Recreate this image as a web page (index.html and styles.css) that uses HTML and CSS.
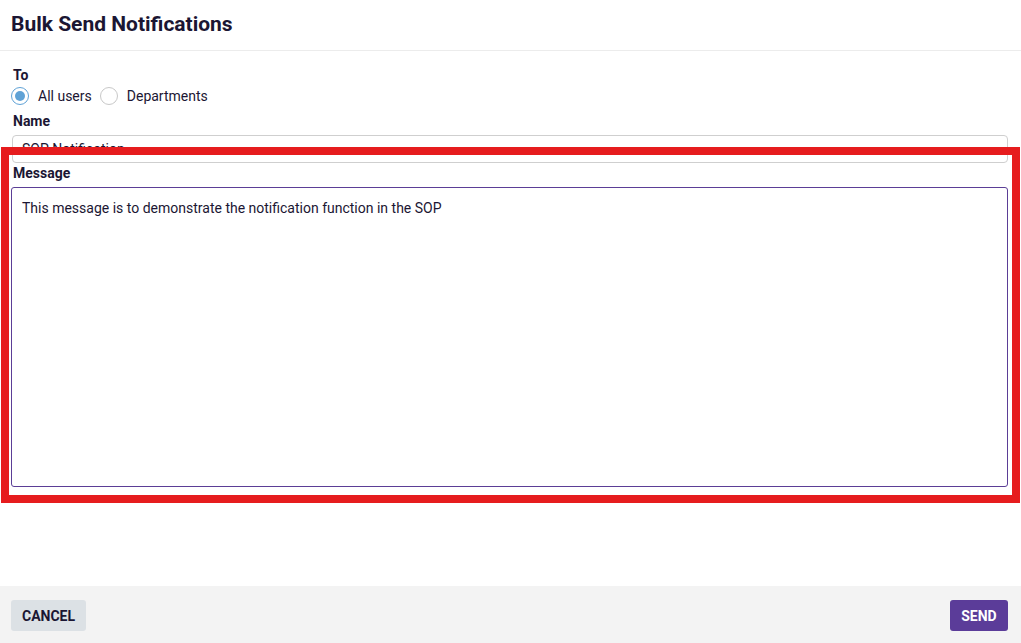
FILE: index.html
```html
<!DOCTYPE html>
<html>
<head>
<meta charset="utf-8">
<link rel="stylesheet" href="styles.css">
</head>
<body>
<div class="dialog">
  <header class="head"><h1 class="title">Bulk Send Notifications</h1></header>
  <main class="body">
    <div class="label">To</div>
    <div class="radios">
      <label class="radio"><span class="dot on"></span><span>All users</span></label>
      <label class="radio"><span class="dot"></span><span>Departments</span></label>
    </div>
    <div class="label">Name</div>
    <div class="input">SOP Notification</div>
    <div class="label msg">Message</div>
    <div class="textarea">This message is to demonstrate the notification function in the SOP</div>
  </main>
  <footer class="foot">
    <button class="btn cancel">CANCEL</button>
    <button class="btn send">SEND</button>
  </footer>
  <div class="highlight"></div>
</div>
</body>
</html>
```
FILE: styles.css
```css
* { box-sizing: border-box; }
html, body { margin: 0; padding: 0; background: #fff; }
body { font-family: Roboto, "Noto Sans", sans-serif; color: #1b1633; }
.dialog { position: relative; width: 1021px; height: 643px; display: flex; flex-direction: column; }
.head { height: 51px; border-bottom: 1px solid #ececec; padding: 12px 12px 0 11px; }
.title { margin: 0; font-size: 21px; font-weight: 700; line-height: 24px; color: #1b1633; }
.body { flex: 1; padding: 16px 13px 0 11px; display: flex; flex-direction: column; }
.label { font-size: 14px; font-weight: 700; line-height: 17px; padding-left: 2px; }
.radios { display: flex; gap: 8px; height: 24px; align-items: center; margin-top: 0; margin-bottom: 5px; }
.radio { display: flex; align-items: center; gap: 9px; font-size: 14px; color: #1b1633; }
.dot { width: 18px; height: 18px; border-radius: 50%; border: 1px solid #c8c8c8; background: #fff; position: relative; }
.dot.on { border-color: #5fa2d6; }
.dot.on::after { content: ""; position: absolute; left: 3px; top: 3px; width: 10px; height: 10px; border-radius: 50%; background: #5fa2d6; }
.input { margin-top: 5px; height: 28px; border: 1px solid #cfcfcf; border-radius: 4px; padding: 5px 9px; font-size: 14px; line-height: 17px; margin-left: 1px; color: #1b1633; }
.label.msg { margin-top: 2px; }
.textarea { margin-top: 5px; height: 300px; border: 1px solid #5b3e96; border-radius: 3px; padding: 12px 10px; font-size: 14px; line-height: 17px; }
.foot { height: 57px; background: #f3f3f3; display: flex; justify-content: space-between; align-items: flex-start; padding: 14px 13px 0 11px; }
.btn { height: 31px; border: none; border-radius: 3px; font-family: Roboto, sans-serif; font-size: 14px; font-weight: 700; padding: 0 11px; }
.cancel { background: #dce1e5; color: #1b1633; width: 75px; }
.send { background: #5b3c99; color: #fff; width: 58px; }
.highlight { position: absolute; left: 1px; top: 147px; width: 1019px; height: 356px; border: 8px solid #e61c1e; pointer-events: none; }
```
